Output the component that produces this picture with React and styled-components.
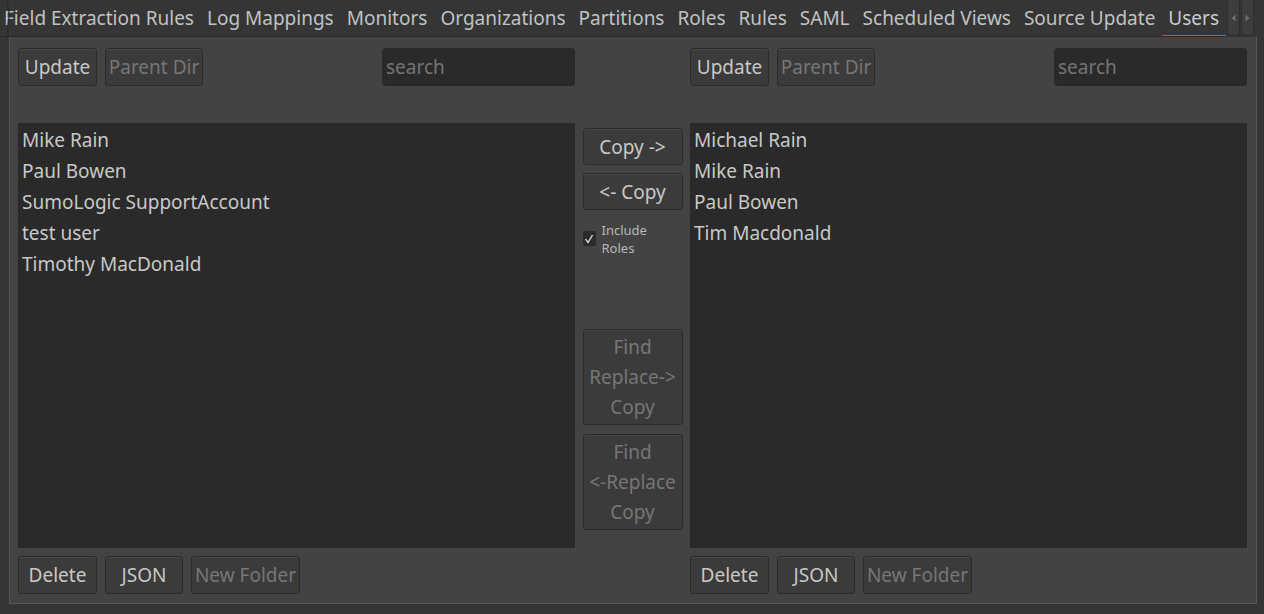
import styled, { createGlobalStyle } from 'styled-components';

const GlobalStyle = createGlobalStyle`
	html, body {
		margin: 0;
		padding: 0;
		background: #353535;
		font-family: "Noto Sans", "Open Sans", sans-serif;
	}
`;

const TABS = [
	'Field Extraction Rules',
	'Log Mappings',
	'Monitors',
	'Organizations',
	'Partitions',
	'Roles',
	'Rules',
	'SAML',
	'Scheduled Views',
	'Source Update',
	'Users',
];

const LEFT_USERS = [
	'Mike Rain',
	'Paul Bowen',
	'SumoLogic SupportAccount',
	'test user',
	'Timothy MacDonald',
];

const RIGHT_USERS = ['Michael Rain', 'Mike Rain', 'Paul Bowen', 'Tim Macdonald'];

const Window = styled.div`
	width: 1264px;
	height: 614px;
	background: #353535;
	display: flex;
	flex-direction: column;
	overflow: hidden;
`;

const TabBar = styled.div`
	position: relative;
	height: 37px;
	display: flex;
	align-items: stretch;
`;

const TearMark = styled.svg`
	position: absolute;
	left: 4px;
	top: 0;
`;

const TabStrip = styled.div`
	width: 1226px;
	display: flex;
	justify-content: flex-end;
	overflow: hidden;
	border-bottom: 1px solid #2a2a2a;
	box-sizing: border-box;
`;

const Tab = styled.div`
	flex: none;
	padding: 0 7px 1px 6px;
	display: flex;
	align-items: center;
	font-size: 19px;
	color: ${({ $active }) => ($active ? '#c9ccd0' : '#c0c2c4')};
	white-space: nowrap;
	box-shadow: ${({ $active }) => ($active ? 'inset 0 -2px 0 #2a82da' : 'none')};
	margin-bottom: -1px;
`;

const ScrollButtons = styled.div`
	display: flex;
	gap: 1px;
	padding-left: 1px;
`;

const ScrollButton = styled.div`
	width: 13px;
	height: 36px;
	background: #3d3d3d;
	border: 1px solid #2c2c2c;
	border-top: none;
	border-radius: 0 0 3px 3px;
	box-sizing: border-box;
	display: flex;
	align-items: center;
	justify-content: center;
`;

const Panel = styled.div`
	width: 1248px;
	margin-left: 9px;
	height: 567px;
	box-sizing: border-box;
	background: #434343;
	border: 1px solid #575757;
	border-top: none;
	padding: 11px 9px 9px 8px;
	display: grid;
	grid-template-columns: 557px 100px 557px;
	column-gap: 7.5px;
`;

const Side = styled.div`
	display: flex;
	flex-direction: column;
	min-height: 0;
`;

const TopRow = styled.div`
	height: 38px;
	display: flex;
	gap: 8px;
	align-items: stretch;
`;

const Spacer = styled.div`
	flex: 1;
`;

const Button = styled.button`
	flex: none;
	width: ${({ $w }) => $w}px;
	height: ${({ $h }) => $h || 38}px;
	padding: 0;
	margin: 0;
	box-sizing: border-box;
	background: #3b3b3b;
	border: 1px solid #2b2b2b;
	border-radius: 3px;
	box-shadow: inset 0 1px 0 #474747;
	font-family: inherit;
	font-size: 19px;
	line-height: 30px;
	color: ${({ disabled }) => (disabled ? '#767676' : '#c8c8c8')};
	white-space: pre-line;
	cursor: default;
`;

const Search = styled.input`
	width: 193px;
	box-sizing: border-box;
	background: #2a2a2a;
	border: none;
	border-radius: 4px;
	padding: 0 4px;
	font-family: inherit;
	font-size: 19px;
	color: #c8c8c8;
	outline: none;

	&::placeholder {
		color: #747474;
	}
`;

const List = styled.div`
	margin-top: 37px;
	height: 426px;
	background: #2a2a2a;
	padding-top: 2px;
	box-sizing: border-box;
`;

const Item = styled.div`
	height: 31px;
	line-height: 31px;
	padding-left: 4px;
	font-size: 19px;
	color: #c8c8c8;
	white-space: nowrap;
`;

const BottomRow = styled.div`
	margin-top: 8px;
	height: 38px;
	display: flex;
	gap: 8px;
`;

const Middle = styled.div`
	padding-top: 80px;
	display: flex;
	flex-direction: column;
`;

const ButtonStack = styled.div`
	display: flex;
	flex-direction: column;
	gap: 8px;
`;

const CheckRow = styled.label`
	margin-top: 11px;
	display: flex;
	align-items: flex-start;
	gap: 6px;
`;

const CheckBox = styled.span`
	margin-top: 10px;
	width: 13px;
	height: 15px;
	background: #2a2a2a;
	border-radius: 2px;
	display: flex;
	align-items: center;
	justify-content: center;
	flex: none;
`;

const CheckLabel = styled.span`
	font-size: 13px;
	line-height: 18px;
	color: #b8b8b8;
`;

const FindStack = styled.div`
	margin-top: 72px;
	display: flex;
	flex-direction: column;
	gap: 9px;
`;

const Arrow = ({ dir }) => (
	<svg width="5" height="8" viewBox="0 0 5 8">
		<path d={dir === 'left' ? 'M4.5 0.5 L0.5 4 L4.5 7.5 Z' : 'M0.5 0.5 L4.5 4 L0.5 7.5 Z'} fill="#6c6c6c" />
	</svg>
);

const Tick = () => (
	<svg width="10" height="10" viewBox="0 0 10 10">
		<path d="M1.5 5.2 L4 8.5 L8.5 1" fill="none" stroke="#d8d8d8" strokeWidth="1.4" />
	</svg>
);

const Browser = ({ users }) => (
	<Side>
		<TopRow>
			<Button $w={79}>Update</Button>
			<Button $w={98} disabled>
				Parent Dir
			</Button>
			<Spacer />
			<Search placeholder="search" />
		</TopRow>
		<List>
			{users.map((name) => (
				<Item key={name}>{name}</Item>
			))}
		</List>
		<BottomRow>
			<Button $w={79}>Delete</Button>
			<Button $w={78}>JSON</Button>
			<Button $w={109} disabled>
				New Folder
			</Button>
		</BottomRow>
	</Side>
);

export default function App() {
	return (
		<Window>
			<GlobalStyle />
			<TabBar>
				<TabStrip>
					{TABS.map((tab) => (
						<Tab key={tab} $active={tab === 'Users'}>
							{tab}
						</Tab>
					))}
				</TabStrip>
				<TearMark width="8" height="36" viewBox="0 0 8 36">
					<path d="M3 0 C4 8, 6 12, 5 18 C4 24, 3 28, 4 36" fill="none" stroke="#2a2a2a" strokeWidth="1.2" />
				</TearMark>
				<ScrollButtons>
					<ScrollButton>
						<Arrow dir="left" />
					</ScrollButton>
					<ScrollButton>
						<Arrow dir="right" />
					</ScrollButton>
				</ScrollButtons>
			</TabBar>
			<Panel>
				<Browser users={LEFT_USERS} />
				<Middle>
					<ButtonStack>
						<Button $w={100} $h={37}>
							Copy -&gt;
						</Button>
						<Button $w={100} $h={37}>
							&lt;- Copy
						</Button>
					</ButtonStack>
					<CheckRow>
						<CheckBox>
							<Tick />
						</CheckBox>
						<CheckLabel>
							Include
							<br />
							Roles
						</CheckLabel>
					</CheckRow>
					<FindStack>
						<Button $w={100} $h={96} disabled>
							{'Find\nReplace->\nCopy'}
						</Button>
						<Button $w={100} $h={96} disabled>
							{'Find\n<-Replace\nCopy'}
						</Button>
					</FindStack>
				</Middle>
				<Browser users={RIGHT_USERS} />
			</Panel>
		</Window>
	);
}
